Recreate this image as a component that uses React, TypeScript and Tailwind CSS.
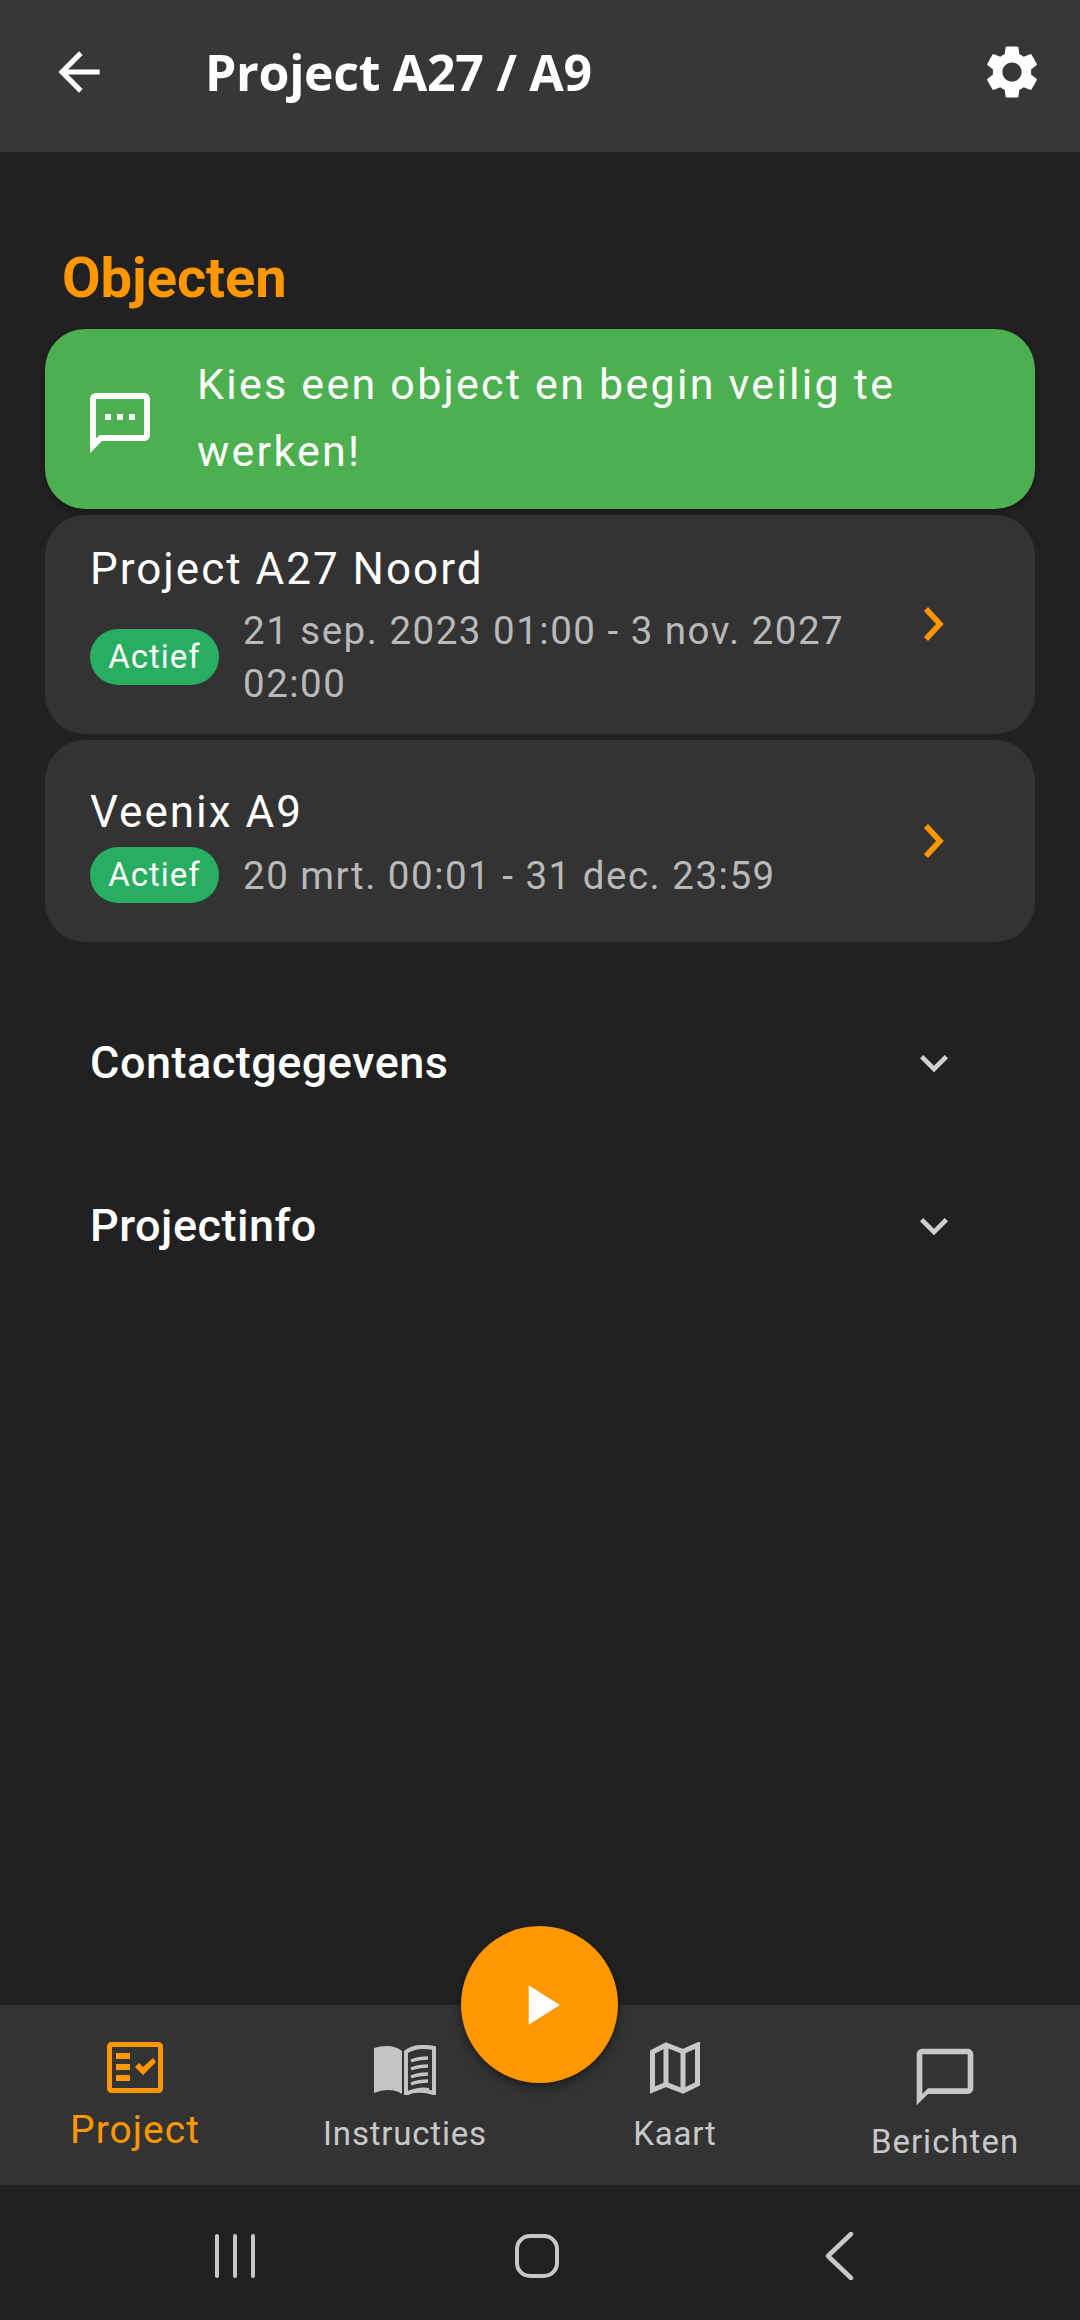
import { MdArrowBack, MdSettings, MdOutlineSms, MdPlayArrow, MdOutlineChatBubbleOutline, MdKeyboardArrowDown } from 'react-icons/md'

const ROBOTO = 'font-[Roboto,sans-serif]'

function Chevron() {
  return (
    <svg width="24" height="36" viewBox="0 0 24 36" fill="none" className="shrink-0">
      <path d="M4 3l14 15L4 33" stroke="#ff9800" strokeWidth="5.5" />
    </svg>
  )
}

function Badge() {
  return (
    <span className="shrink-0 flex items-center justify-center w-[129px] h-[56px] rounded-full bg-[#27ae60] text-white text-[33px] tracking-[1px]">
      Actief
    </span>
  )
}

function ProjectIcon() {
  return (
    <svg width="56" height="51" viewBox="0 0 56 51" fill="#ff9800">
      <rect x="2.500" y="2.500" width="51" height="46" rx="2" fill="none" stroke="#ff9800" strokeWidth="5" />
      <rect x="9" y="11" width="14" height="6" />
      <rect x="9" y="22" width="14" height="6" />
      <rect x="9" y="33" width="14" height="6" />
      <path d="M28 25l4-4 4 4 10-9 3 4-13 13z" />
    </svg>
  )
}

function BookIcon() {
  return (
    <svg width="62" height="50" viewBox="0 0 62 50" fill="none">
      <path d="M0 3c10-3 21-3 28 3v43c-7-5-18-5-28-1z" fill="#c4c4c4" />
      <path d="M32 7c6-5 17-6 28-4v45c-10-3-22-3-28 1z" stroke="#c4c4c4" strokeWidth="4" />
      <path d="M35 6c6-3 14-4 20-3M35 47c6-3 14-4 20-3" stroke="#c4c4c4" strokeWidth="2" />
      <path d="M37 16c5-2 10-3 17-3M37 24c5-2 10-3 17-3M37 32c5-2 10-3 17-3M37 39c5-2 10-3 17-3" stroke="#c4c4c4" strokeWidth="3.500" />
    </svg>
  )
}

function MapIcon() {
  return (
    <svg width="50" height="52" viewBox="0 0 50 52" fill="none">
      <path d="M2.500 10L16 3l17 6.500L47.500 3v39L33 49l-17-6.500L2.500 48z" stroke="#c8c8c8" strokeWidth="5" />
      <path d="M16 3v39M33 9v40" stroke="#c8c8c8" strokeWidth="5" />
    </svg>
  )
}

function NavItem({
  label,
  icon,
  labelClass,
  iconBox,
}: {
  label: string
  icon: React.ReactNode
  labelClass: string
  iconBox: string
}) {
  return (
    <div className="flex-1 flex flex-col items-center pt-[36px]">
      <div className={`flex items-center justify-center ${iconBox}`}>{icon}</div>
      <span className={labelClass}>{label}</span>
    </div>
  )
}

function Accordion({ title }: { title: string }) {
  return (
    <div className="h-[163px] pl-[90px] pr-[130px] flex items-center justify-between">
      <span className="text-[45px] font-medium text-white tracking-[0.5px]">{title}</span>
      <MdKeyboardArrowDown size={56} color="#d0d0d0" className="mr-[-12px]" />
    </div>
  )
}

export default function App() {
  return (
    <div className={`relative flex flex-col w-[1080px] h-[2320px] bg-[#212121] overflow-hidden ${ROBOTO}`}>
      <header className="h-[152px] shrink-0 bg-[#373737] flex items-center pl-[48px] pr-[36px] pb-[8px]">
        <MdArrowBack size={62} color="#fff" />
        <h1 className="ml-[95px] flex-1 font-['Open_Sans',sans-serif] font-bold text-[50px] tracking-[-0.3px] text-white">
          Project A27 / A9
        </h1>
        <MdSettings size={64} color="#fff" />
      </header>

      <main className="flex-1 px-[45px]">
        <h2 className="mt-[98px] pl-[17px] h-[56px] flex items-center text-[56px] leading-none font-bold text-[#ff9800]">
          Objecten
        </h2>
        <div className="mt-[23px] h-[180px] rounded-[40px] bg-[#4caf50] flex items-center pl-[39px] pr-[60px] shadow-[0_2px_4px_rgba(0,0,0,0.4)]">
          <MdOutlineSms size={72} color="#fff" className="shrink-0 mt-[8px]" />
          <p className="ml-[41px] mb-[2px] text-[43px] leading-[67px] tracking-[2.25px] text-white">
            Kies een object en begin veilig te werken!
          </p>
        </div>

        <div className="mt-[6px] h-[219px] rounded-[40px] bg-[#333333] flex items-center pl-[45px] pr-[89px]">
          <div className="flex-1 pt-[4px]">
            <div className="text-[44px] leading-[50px] tracking-[2px] text-white">Project A27 Noord</div>
            <div className="mt-[10px] flex items-center">
              <Badge />
              <p className="ml-[24px] w-[640px] text-[38.5px] leading-[53px] tracking-[1.5px] text-[#b9b9b9]">
                21 sep. 2023 01:00 - 3 nov. 2027 02:00
              </p>
            </div>
          </div>
          <div className="mb-[2px]">
            <Chevron />
          </div>
        </div>

        <div className="mt-[6px] h-[202px] rounded-[40px] bg-[#333333] flex items-center pl-[45px] pr-[89px]">
          <div className="flex-1 pt-[8px]">
            <div className="text-[44px] leading-[50px] tracking-[2px] text-white">Veenix A9</div>
            <div className="mt-[10px] flex items-center">
              <Badge />
              <p className="ml-[24px] text-[38.5px] leading-[53px] tracking-[1.5px] text-[#b9b9b9]">
                20 mrt. 00:01 - 31 dec. 23:59
              </p>
            </div>
          </div>
          <Chevron />
        </div>

        <div className="mt-[39px] -mx-[45px]">
          <Accordion title="Contactgegevens" />
          <Accordion title="Projectinfo" />
        </div>
      </main>

      <nav className="h-[180px] shrink-0 bg-[#333333] flex">
        <NavItem
          label="Project"
          icon={<ProjectIcon />}
          iconBox="h-[53px]"
          labelClass="text-[39px] leading-[44px] mt-[14px] tracking-[1px] text-[#ff9800]"
        />
        <NavItem
          label="Instructies"
          icon={<BookIcon />}
          iconBox="h-[58px]"
          labelClass="text-[33px] leading-[38px] mt-[16px] tracking-[0.8px] text-[#c8c8c8]"
        />
        <NavItem
          label="Kaart"
          icon={<MapIcon />}
          iconBox="h-[54px]"
          labelClass="text-[33px] leading-[38px] mt-[20px] tracking-[0.8px] text-[#c8c8c8]"
        />
        <NavItem
          label="Berichten"
          icon={<MdOutlineChatBubbleOutline size={68} color="#c8c8c8" />}
          iconBox="h-[72px]"
          labelClass="text-[33px] leading-[38px] mt-[10px] tracking-[1px] text-[#c8c8c8]"
        />
      </nav>

      <div className="h-[135px] shrink-0 bg-[#212121] flex items-center justify-center">
        <div className="flex items-center pt-[7px] pr-[11px]">
          <svg width="42" height="44" viewBox="0 0 42 44" stroke="#c8c8c8" strokeWidth="4" strokeLinecap="round">
            <path d="M3 2v40M21 2v40M39 2v40" />
          </svg>
          <svg width="44" height="44" viewBox="0 0 44 44" fill="none" stroke="#c8c8c8" strokeWidth="4" className="ml-[259px]">
            <rect x="2" y="2" width="40" height="40" rx="13" />
          </svg>
          <svg width="30" height="48" viewBox="0 0 30 48" fill="none" stroke="#c8c8c8" strokeWidth="4.500" strokeLinecap="round" strokeLinejoin="round" className="ml-[266px]">
            <path d="M26 2L3 24l23 22" />
          </svg>
        </div>
      </div>

      <button className="absolute left-[461px] top-[1926px] w-[157px] h-[157px] rounded-full bg-[#ff9800] flex items-center justify-center shadow-[0_4px_10px_rgba(0,0,0,0.45)]">
        <MdPlayArrow size={68} color="#fff" />
      </button>
    </div>
  )
}
